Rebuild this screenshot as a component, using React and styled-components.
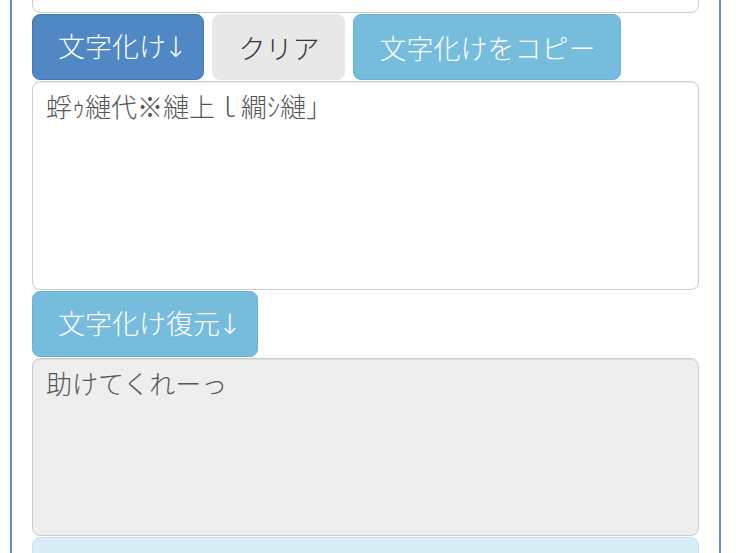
import React from "react";
import styled, { createGlobalStyle } from "styled-components";

const GlobalStyle = createGlobalStyle`
  html, body {
    margin: 0;
    padding: 0;
    background: #ffffff;
    overflow: hidden;
  }
  body {
    font-family: "Noto Sans CJK JP", "Noto Sans", sans-serif;
  }
`;

const Frame = styled.div`
  margin: -187px 0 0 10px;
  width: 711px;
  min-height: 800px;
  box-sizing: border-box;
  border-left: 2px solid #5a8fd3;
  border-right: 2px solid #5a8fd3;
  padding: 0 20px 0 20px;
  display: flex;
  flex-direction: column;
  gap: 1px;
`;

const TextBox = styled.textarea`
  display: block;
  width: 100%;
  height: ${(p) => p.$h}px;
  box-sizing: border-box;
  margin: 0;
  padding: 5px 13px;
  border: 1px solid #cccccc;
  border-radius: 8px;
  background: ${(p) => (p.readOnly ? "#eeeeee" : "#ffffff")};
  color: #555555;
  font-family: "Noto Sans CJK JP", "Noto Sans", sans-serif;
  font-size: 26px;
  font-weight: 300;
  line-height: 37px;
  resize: none;
  outline: none;
  box-shadow: inset 0 1px 1px rgba(0, 0, 0, 0.075);
`;

const ButtonRow = styled.div`
  display: flex;
  gap: 8px;
`;

const variants = {
  primary: { bg: "#5088c5", border: "#4478b3", color: "#ffffff" },
  plain: { bg: "#e8e8e8", border: "#e8e8e8", color: "#333333" },
  info: { bg: "#76bcdc", border: "#66b3d6", color: "#ffffff" },
};

const Button = styled.button`
  height: 66px;
  box-sizing: border-box;
  margin: 0;
  padding: 0 25px;
  border: 1px solid ${(p) => variants[p.$kind].border};
  border-radius: 8px;
  background: ${(p) => variants[p.$kind].bg};
  color: ${(p) => variants[p.$kind].color};
  font-family: "Noto Sans CJK JP", "Noto Sans", sans-serif;
  font-size: 27px;
  font-weight: 300;
  line-height: 1;
  white-space: nowrap;
  cursor: pointer;
  align-self: flex-start;
`;

const Arrow = styled.span`
  font-family: "DejaVu Sans", sans-serif;
  font-weight: 200;
  font-size: 28px;
  margin-left: -2px;
  margin-right: -9px;
`;

const Alert = styled.div`
  height: 120px;
  box-sizing: border-box;
  border: 1px solid #bce8f1;
  border-radius: 8px;
  background: #d9edf7;
`;

export default function App() {
  return (
    <>
      <GlobalStyle />
      <Frame>
        <TextBox $h={200} defaultValue="助けてくれーっ" />
        <ButtonRow>
          <Button $kind="primary">
            文字化け<Arrow>↓</Arrow>
          </Button>
          <Button $kind="plain">クリア</Button>
          <Button $kind="info">文字化けをコピー</Button>
        </ButtonRow>
        <TextBox $h={209} defaultValue="蜉ｩ縺代※縺上ｌ繝ｼ縺｣" />
        <Button $kind="info">
          文字化け復元<Arrow>↓</Arrow>
        </Button>
        <TextBox $h={178} readOnly defaultValue="助けてくれーっ" />
        <Alert />
      </Frame>
    </>
  );
}
